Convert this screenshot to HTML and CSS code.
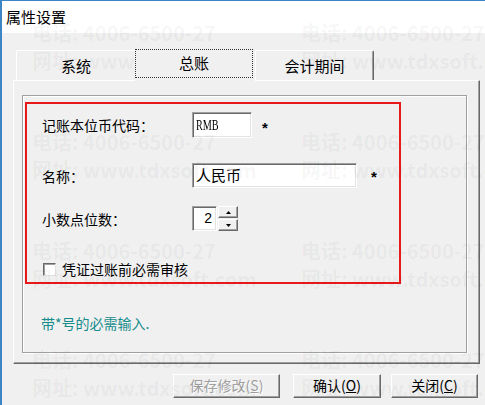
FILE: index.html
```html
<html>
<head>
<meta http-equiv="content-type" content="text/html; charset=utf-8">
<link rel="stylesheet" href="styles.css">
<title>属性设置</title>
</head>
<body>
<div class=window>
<div class=titlebar>属性设置</div>
<div class=dialog>
<div class=tabs>
<div class="tab first">系统</div>
<div class="tab here"><div class=focus>总账</div></div>
<div class="tab last">会计期间</div>
</div>
<div class=panel>
<div class=group>
<div class=marked>
<div class="row r1"><div class=lbl>记账本位币代码：</div><div class="field code"><span>RMB</span></div><span class=req>*</span></div>
<div class="row r2"><div class=lbl>名称：</div><div class="field name">人民币</div><span class="req far">*</span></div>
<div class="row r3"><div class=lbl>小数点位数：</div><div class="field num">2</div>
<div class=arrows>
<div class=arrow><svg width="5" height="3" viewBox="0 0 5 3"><path d="M0 3H5L2.5 0Z" fill="#000"/></svg></div>
<div class=arrow><svg width="5" height="3" viewBox="0 0 5 3"><path d="M0 0H5L2.5 3Z" fill="#000"/></svg></div>
</div></div>
<div class="row r4"><div class=check></div><div class=cbl>凭证过账前必需审核</div></div>
</div>
<p class=note>带*号的必需输入.</p>
</div>
</div>
<div class=buttons>
<div class="btn off save">保存修改(<u>S</u>)</div>
<div class="btn ok">确认(<u>O</u>)</div>
<div class="btn close">关闭(<u>C</u>)</div>
</div>
</div>
<div class=watermark>
<div class=wm><div>电话: 4006-6500-27</div><div>网址: www.tdxsoft.com</div></div>
<div class=wm><div>电话: 4006-6500-27</div><div>网址: www.tdxsoft.com</div></div>
<div class=wm><div>电话: 4006-6500-27</div><div>网址: www.tdxsoft.com</div></div>
<div class=wm><div>电话: 4006-6500-27</div><div>网址: www.tdxsoft.com</div></div>
<div class=wm><div>电话: 4006-6500-27</div><div>网址: www.tdxsoft.com</div></div>
<div class=wm><div>电话: 4006-6500-27</div><div>网址: www.tdxsoft.com</div></div>
<div class=wm><div>电话: 4006-6500-27</div><div>网址: www.tdxsoft.com</div></div>
<div class=wm><div>电话: 4006-6500-27</div><div>网址: www.tdxsoft.com</div></div>
</div>
</div>
</body>
</html>
```

FILE: styles.css
```css
html,body{margin:0;padding:0;overflow:hidden;background:#f0f0f0}
body{font-family:"Noto Sans CJK SC","Noto Sans",sans-serif;color:#000}
*{box-sizing:border-box}
.window{position:relative;width:485px;height:405px;border-top:1px solid #3d86c6;border-left:2px solid #3d86c6;background:#f0f0f0}
.titlebar{height:32px;background:#fff;padding-left:4px;font-size:15px;line-height:32px}
.dialog{padding-top:16px}
.tabs{display:flex;align-items:flex-end;height:32px;margin-bottom:-1px;padding-left:14px}
.tab{width:119px;height:30px;margin-bottom:1px;font-size:15px;line-height:29px;text-align:center;
border-top:1px solid #fff;border-left:1px solid #fff;border-top-left-radius:2px}
.first{border-right:0}
.last{border-right:1px solid #696969;box-shadow:inset -1px 0 #a0a0a0;border-top-right-radius:2px}
.here{position:relative;z-index:1;width:120px;height:32px;margin-bottom:0;border:0;background:#f0f0f0}
.focus{height:29px;margin-right:2px;border:1px dotted #333;line-height:26px}
.panel{width:467px;height:284px;margin-left:11px;padding:14px 0 0 8px;border:1px solid;
border-color:#fff #696969 #696969 #fff;box-shadow:inset -1px -1px #a0a0a0}
.group{width:445px;height:258px;padding:6px 0 0 2px;border:1px solid #a0a0a0;box-shadow:1px 1px #fff,inset 1px 1px #fff}
.marked{width:376px;height:182px;padding:8px 0 0 15px;border:2px solid #e8191b}
.row{display:flex;align-items:center;height:25px}
.r1{height:26px}
.r2{margin-top:25px}
.r3{margin-top:18px}
.r4{margin-top:28px;height:20px}
.lbl{width:150px;font-size:14px;line-height:20px}
.field{height:100%;background:#fff;border:1px solid;border-color:#a0a0a0 #fff #fff #a0a0a0;
box-shadow:inset 1px 1px #696969,inset -1px -1px #e3e3e3;white-space:nowrap;overflow:hidden}
.code{width:60px;padding:3px 0 0 3px}
.code span{display:inline-block;font:15px/18px "Liberation Serif",serif;transform:scaleX(0.68);transform-origin:left}
.name{width:165px;padding-left:3px;font-size:15px;line-height:22px}
.num{width:25px;padding-right:4px;text-align:right;font:14px/23px "Liberation Sans",sans-serif}
.req{align-self:flex-start;margin:8px 0 0 10px;font:bold 15px/16px "Liberation Sans",sans-serif}
.far{margin:6px 0 0 14px}
.arrows{display:flex;flex-direction:column;gap:1px;margin-left:1px;height:25px}
.arrow{display:flex;align-items:center;justify-content:center;width:20px;height:12px;background:#f0f0f0;
border:1px solid;border-color:#fff #696969 #696969 #fff;box-shadow:inset -1px -1px #a0a0a0}
.arrow svg{display:block}
.check{width:13px;height:13px;margin-left:1px;background:#fff;border:1px solid;
border-color:#696969 #e3e3e3 #e3e3e3 #696969;box-shadow:inset 1px 1px #a0a0a0}
.cbl{margin-left:6px;font-size:14px;line-height:20px}
.note{margin:29px 0 0 16px;color:#148c8c;font-size:14px;line-height:20px}
.buttons{display:flex;margin-top:10px;padding-left:171px}
.btn{height:24px;font-size:14px;line-height:21px;text-align:center;background:#f0f0f0;
border:1px solid;border-color:#fff #696969 #696969 #fff;box-shadow:inset -1px -1px #a0a0a0}
.save{width:107px}
.ok{width:88px;margin-left:13px}
.close{width:87px;margin-left:10px}
.off{color:#a0a0a0;text-shadow:1px 1px #fff}
.watermark{position:absolute;top:0;left:0;right:0;bottom:0;pointer-events:none;overflow:hidden;
display:grid;grid-template-columns:269px 269px;grid-auto-rows:109px;padding:18px 0 0 30px;
color:rgba(0,0,0,0.05);font-weight:bold;font-size:20px;line-height:28px;white-space:nowrap}
```
